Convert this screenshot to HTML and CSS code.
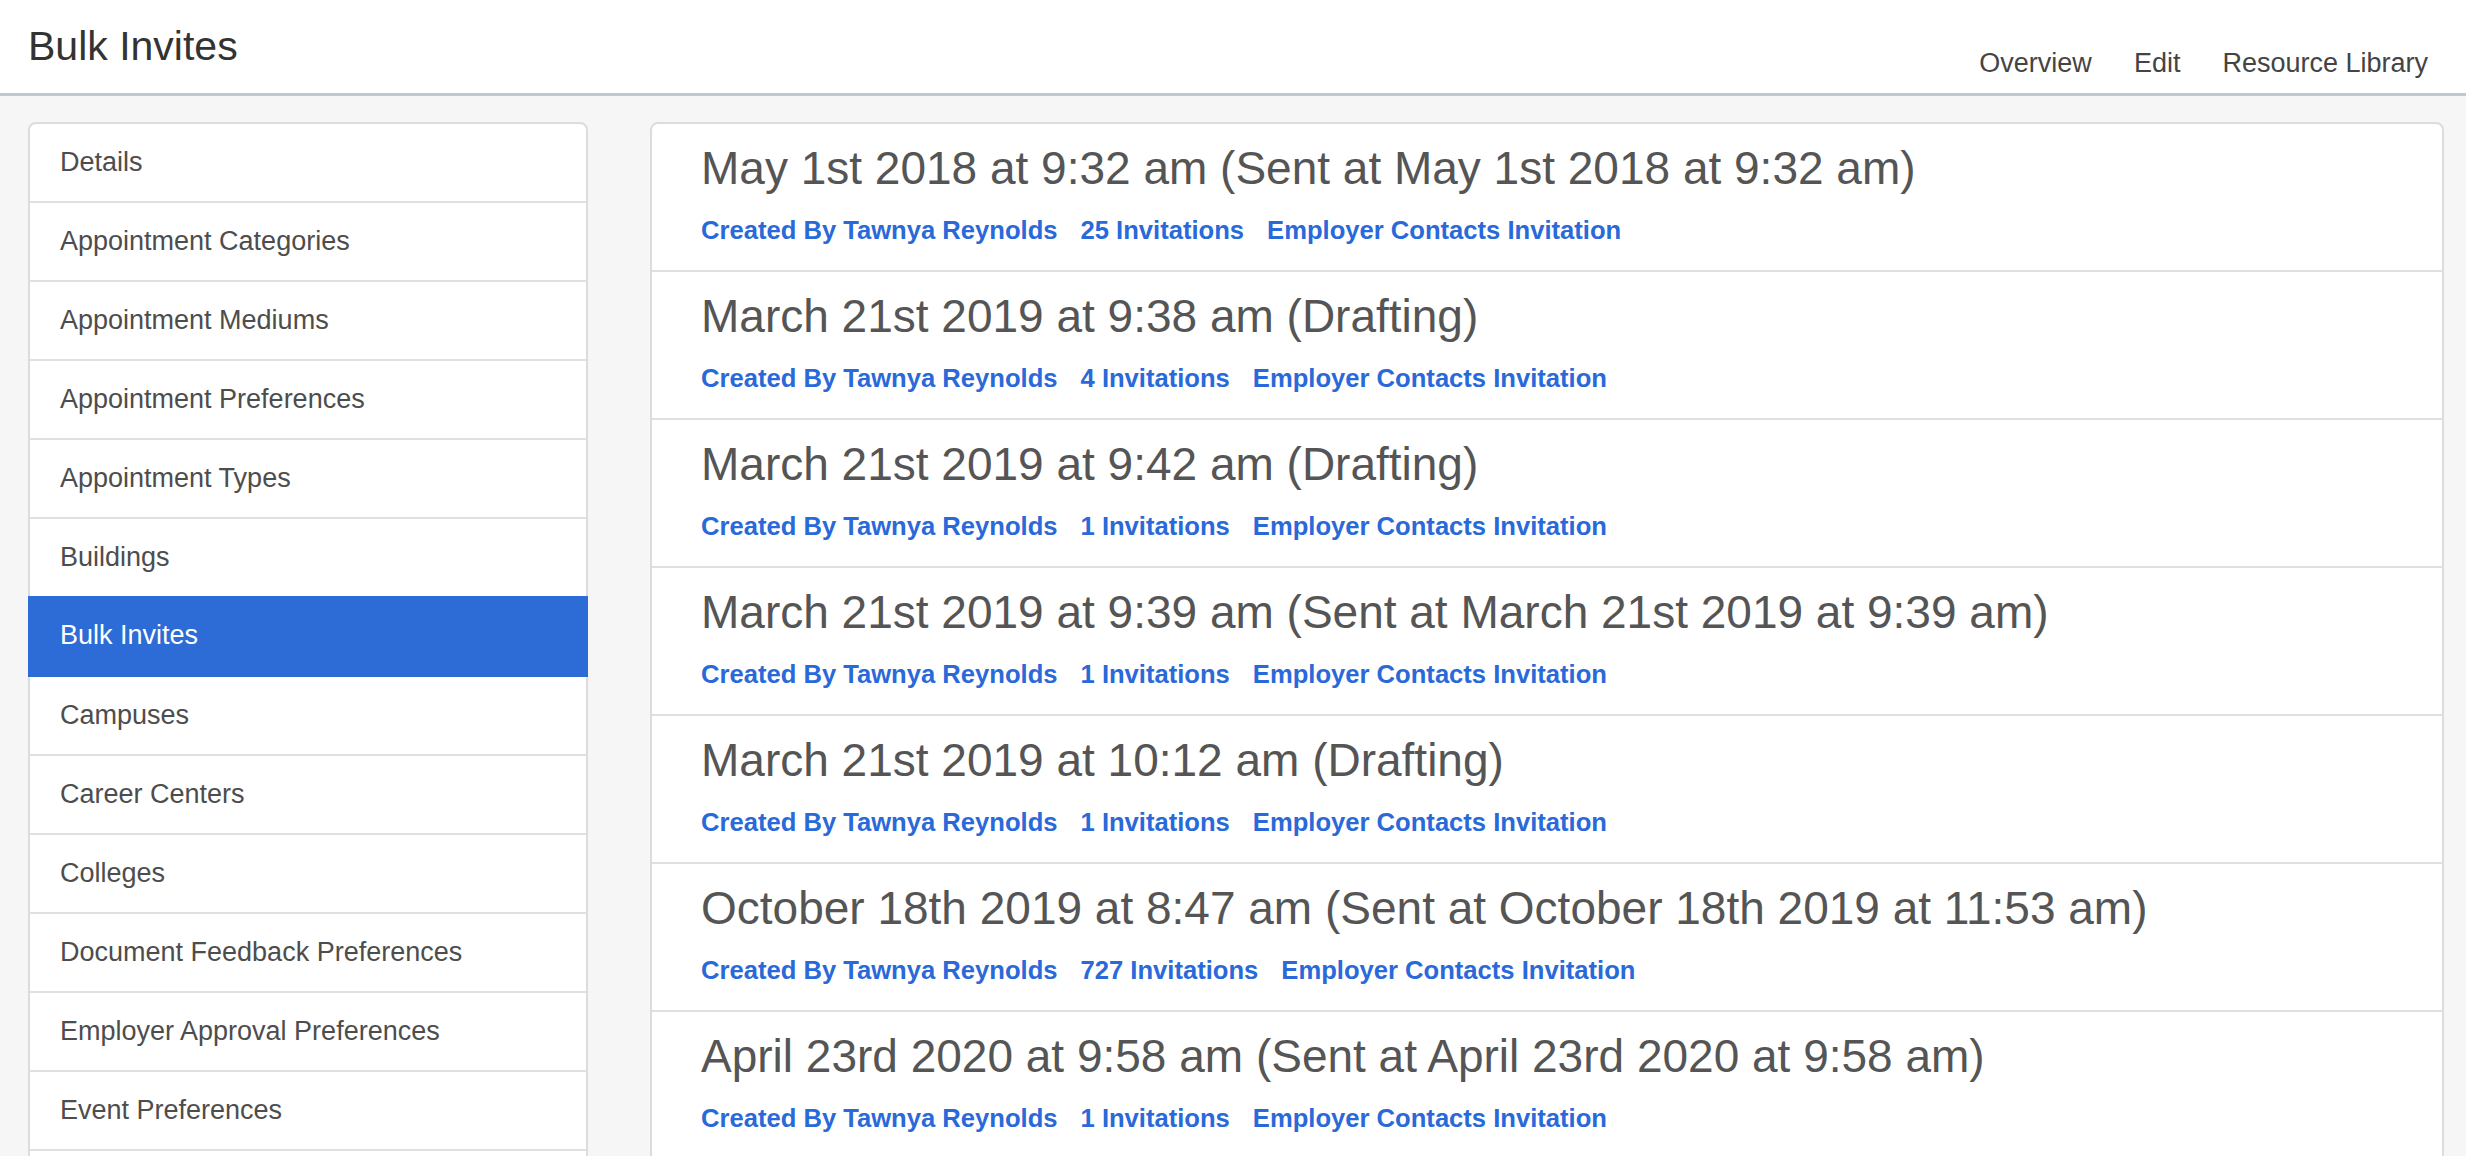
FILE: index.html
```html
<!DOCTYPE html>
<html lang="en">
<head>
    <meta charset="UTF-8">
    <meta name="viewport" content="width=device-width, initial-scale=1.0">
    <title>Bulk Invites</title>
    <link rel="stylesheet" href="styles.css">
</head>
<body>

<header class="topbar">
    <h1 class="page-title">Bulk Invites</h1>
    <nav class="top-nav">
        <a href="#">Overview</a>
        <a href="#">Edit</a>
        <a href="#">Resource Library</a>
    </nav>
</header>

<div class="layout">
    <ul class="side-menu">
        <li><a href="#">Details</a></li>
        <li><a href="#">Appointment Categories</a></li>
        <li><a href="#">Appointment Mediums</a></li>
        <li><a href="#">Appointment Preferences</a></li>
        <li><a href="#">Appointment Types</a></li>
        <li><a href="#">Buildings</a></li>
        <li class="active"><a href="#">Bulk Invites</a></li>
        <li><a href="#">Campuses</a></li>
        <li><a href="#">Career Centers</a></li>
        <li><a href="#">Colleges</a></li>
        <li><a href="#">Document Feedback Preferences</a></li>
        <li><a href="#">Employer Approval Preferences</a></li>
        <li><a href="#">Event Preferences</a></li>
        <li><a href="#">&nbsp;</a></li>
    </ul>

    <div class="invite-list">
        <div class="invite">
            <h3>May 1st 2018 at 9:32 am (Sent at May 1st 2018 at 9:32 am)</h3>
            <div class="meta">
                <a href="#">Created By Tawnya Reynolds</a>
                <a href="#">25 Invitations</a>
                <a href="#">Employer Contacts Invitation</a>
            </div>
        </div>
        <div class="invite">
            <h3>March 21st 2019 at 9:38 am (Drafting)</h3>
            <div class="meta">
                <a href="#">Created By Tawnya Reynolds</a>
                <a href="#">4 Invitations</a>
                <a href="#">Employer Contacts Invitation</a>
            </div>
        </div>
        <div class="invite">
            <h3>March 21st 2019 at 9:42 am (Drafting)</h3>
            <div class="meta">
                <a href="#">Created By Tawnya Reynolds</a>
                <a href="#">1 Invitations</a>
                <a href="#">Employer Contacts Invitation</a>
            </div>
        </div>
        <div class="invite">
            <h3>March 21st 2019 at 9:39 am (Sent at March 21st 2019 at 9:39 am)</h3>
            <div class="meta">
                <a href="#">Created By Tawnya Reynolds</a>
                <a href="#">1 Invitations</a>
                <a href="#">Employer Contacts Invitation</a>
            </div>
        </div>
        <div class="invite">
            <h3>March 21st 2019 at 10:12 am (Drafting)</h3>
            <div class="meta">
                <a href="#">Created By Tawnya Reynolds</a>
                <a href="#">1 Invitations</a>
                <a href="#">Employer Contacts Invitation</a>
            </div>
        </div>
        <div class="invite">
            <h3>October 18th 2019 at 8:47 am (Sent at October 18th 2019 at 11:53 am)</h3>
            <div class="meta">
                <a href="#">Created By Tawnya Reynolds</a>
                <a href="#">727 Invitations</a>
                <a href="#">Employer Contacts Invitation</a>
            </div>
        </div>
        <div class="invite">
            <h3>April 23rd 2020 at 9:58 am (Sent at April 23rd 2020 at 9:58 am)</h3>
            <div class="meta">
                <a href="#">Created By Tawnya Reynolds</a>
                <a href="#">1 Invitations</a>
                <a href="#">Employer Contacts Invitation</a>
            </div>
        </div>
    </div>
</div>

</body>
</html>
```

FILE: styles.css
```css
* {
    box-sizing: border-box;
}
html, body {
    overflow: hidden;
}
body {
    font-family: 'Liberation Sans', Arial, sans-serif;
    background: #f6f6f6;
    margin: 0;
    padding: 0;
    color: #4d4d4d;
}
a {
    text-decoration: none;
}
.topbar {
    display: flex;
    justify-content: space-between;
    align-items: flex-start;
    height: 96px;
    background: #fff;
    border-bottom: 3px solid #bfc7d0;
    padding: 0 38px 0 28px;
}
.page-title {
    margin: 0;
    padding-top: 25px;
    font-size: 41px;
    line-height: 42px;
    font-weight: normal;
    color: #333;
}
.top-nav {
    display: flex;
    gap: 42px;
    padding-top: 50px;
}
.top-nav a {
    font-size: 27px;
    line-height: 27px;
    color: #444;
}
.layout {
    display: flex;
    align-items: flex-start;
    gap: 62px;
    padding: 26px 22px 0 28px;
}
.side-menu {
    list-style: none;
    margin: 0;
    padding: 0;
    width: 560px;
    flex-shrink: 0;
    background: #fff;
    border: 2px solid #dcdcdc;
    border-radius: 8px 8px 0 0;
}
.side-menu li {
    border-bottom: 2px solid #e0e0e0;
}
.side-menu a {
    display: block;
    padding: 0 30px;
    font-size: 27px;
    line-height: 77px;
    color: #4d4d4d;
}
.side-menu li.active {
    background: #2d6bd6;
    border-bottom-color: #2d6bd6;
    margin: -2px -2px 0;
}
.side-menu li.active a {
    color: #fff;
    padding-left: 32px;
    line-height: 79px;
}
.invite-list {
    flex: 1;
    background: #fff;
    border: 2px solid #dcdcdc;
    border-radius: 8px 8px 0 0;
}
.invite {
    padding: 16px 50px 22px 49px;
    border-bottom: 2px solid #e0e0e0;
}
.invite h3 {
    margin: 0;
    font-size: 46px;
    line-height: 56px;
    font-weight: normal;
    color: #555;
}
.meta {
    display: flex;
    gap: 23px;
    margin-top: 16px;
}
.meta a {
    font-size: 25.6px;
    line-height: 36px;
    font-weight: bold;
    color: #2a69d9;
}
```
